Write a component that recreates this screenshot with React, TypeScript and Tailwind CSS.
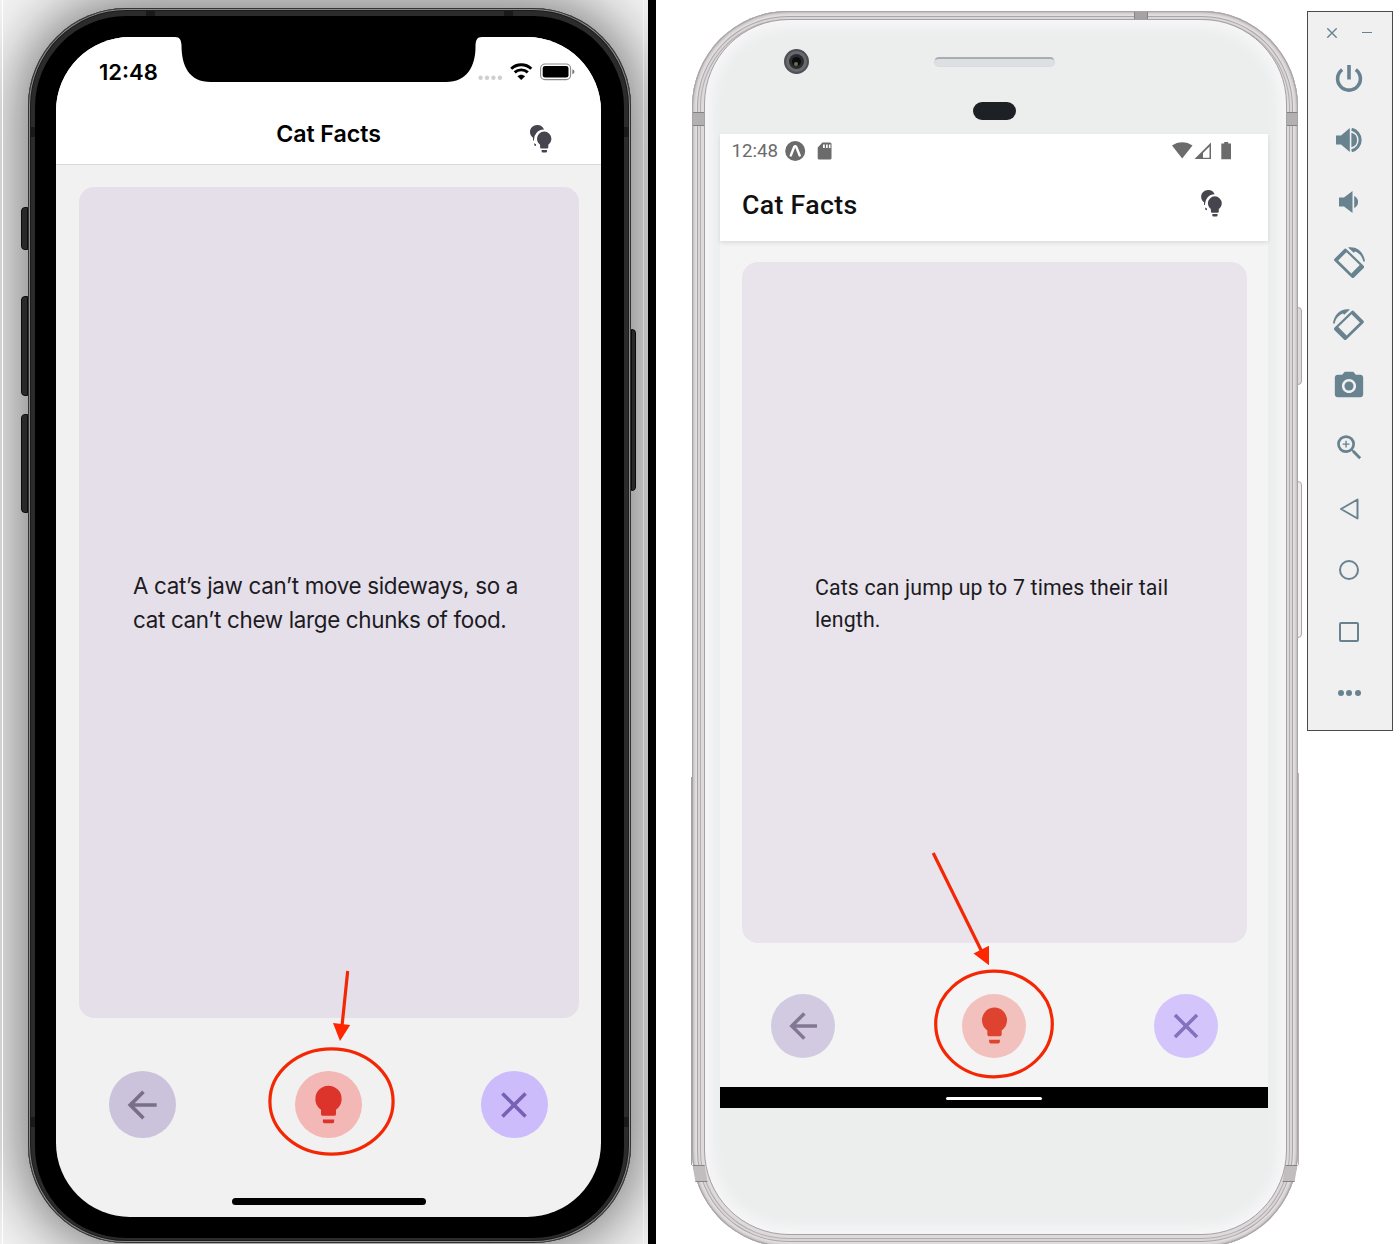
import React from "react";
import { MdCameraAlt, MdZoomIn } from "react-icons/md";

const BULB =
  "M12,2A7,7 0 0,0 5,9C5,11.38 6.19,13.47 8,14.74V17A1,1 0 0,0 9,18H15A1,1 0 0,0 16,17V14.74C17.81,13.47 19,11.38 19,9A7,7 0 0,0 12,2M9,21A1,1 0 0,0 10,22H14A1,1 0 0,0 15,21V20H9V21Z";
const ARROW = "M20,11V13H8L13.5,18.5L12.08,19.92L4.16,12L12.08,4.08L13.5,5.5L8,11H20Z";
const CLOSE =
  "M19,6.41L17.59,5L12,10.59L6.41,5L5,6.41L10.59,12L5,17.59L6.41,19L12,13.41L17.59,19L19,17.59L13.41,12L19,6.41Z";

function Icon({ d, className }: { d: string; className: string }) {
  return (
    <svg viewBox="0 0 24 24" className={className} fill="currentColor">
      <path d={d} />
    </svg>
  );
}

function BulbsIcon({ className }: { className: string }) {
  return (
    <svg viewBox="0 0 22 28" className={className} fill="#46454d">
      <path d="M7.2 0C3.2 0 0 3.1 0 7C0 9.4 1.2 11.4 3 12.7V15.6L4.1 15.5A10 10 0 0 1 14 4.5A7.2 7.2 0 0 0 7.2 0Z" />
      <path d="M4 18.2L6 19.2V21L4.4 20.4Z" />
      <path d="M14.2 6.6A7.2 7.2 0 0 0 7 13.8C7 16.4 8.3 18.4 10.1 19.8V22.2A1.3 1.3 0 0 0 11.4 23.5H17A1.3 1.3 0 0 0 18.3 22.2V19.8C20.1 18.4 21.4 16.4 21.4 13.8A7.2 7.2 0 0 0 14.2 6.6ZM11.6 25H17V26.2A1.3 1.3 0 0 1 15.8 27.5H12.8A1.3 1.3 0 0 1 11.6 26.2Z" />
    </svg>
  );
}

function RotateIcon({ className }: { className: string }) {
  return (
    <svg viewBox="0 0 34 34" className={className}>
      <path
        fill="currentColor"
        fillRule="evenodd"
        d="M1.6 12.2L11.4 2.2Q12.7 .9 14 2.2L31.6 19.4Q32.6 20.7 31.4 21.9L21.7 31.5Q20.4 32.6 19.1 31.5L1.6 14.5Q.5 13.3 1.6 12.2ZM5.3 13.9L18.9 27.2L27.5 18.6L13.9 5.3Z"
      />
      <path fill="currentColor" d="M15.5 .6C24.5 -1 31.8 5.5 33 15H31.2C30.4 10.2 27.4 6.4 22.8 4.6L21.4 6Z" />
    </svg>
  );
}

function IosStatus() {
  return (
    <svg viewBox="0 0 98 20" className="h-5 w-[98px]">
      <g fill="#cfcfcf">
        <circle cx="2.6" cy="15.7" r="2.2" />
        <circle cx="9" cy="15.7" r="2.2" />
        <circle cx="15.4" cy="15.7" r="2.2" />
        <circle cx="21.9" cy="15.7" r="2.2" />
      </g>
      <g fill="none" stroke="#000" strokeWidth="2.9">
        <path d="M33.2 6.7C38.8 1.4 47.7 1.4 53.3 6.7" />
        <path d="M36.7 10.4C40.3 7 46.2 7 49.8 10.4" />
      </g>
      <path d="M39.4 14.2C41.6 12.1 44.9 12.1 47.1 14.2L43.25 18Z" />
      <rect x="62.6" y="2" width="30" height="15.6" rx="4.4" fill="none" stroke="#8a8a8a" strokeWidth="1.1" />
      <rect x="64.7" y="4" width="25.8" height="11.6" rx="2.4" />
      <path d="M94.4 7.3C97.1 8.3 97.1 11.3 94.4 12.3Z" fill="#777" />
    </svg>
  );
}

function IPhone() {
  return (
    <div className="relative ml-[28px] mt-[8px] h-[1235px] w-[603px] rounded-[98px] bg-[#2b2b2b] p-[7px] pt-[8px] shadow-[0_0_60px_8px_rgba(0,0,0,0.52),inset_0_0_0_1px_#333,inset_0_0_0_2px_#8a8a8a,inset_0_0_0_3px_#1c1c1c]">
      <i className="absolute -left-[7px] top-[199px] h-[43px] w-[7px] rounded-l-sm border border-[#0c0c0c] bg-[#292929]" />
      <i className="absolute -left-[7px] top-[288px] h-[100px] w-[7px] rounded-l-sm border border-[#0c0c0c] bg-[#292929]" />
      <i className="absolute -left-[7px] top-[406px] h-[99px] w-[7px] rounded-l-sm border border-[#0c0c0c] bg-[#292929]" />
      <i className="absolute -right-[5px] top-[321px] h-[162px] w-[5px] rounded-r-sm border border-[#0c0c0c] bg-[#292929]" />
      <i className="absolute left-[118px] top-[3px] h-[5px] w-[9px] bg-[#191919]" />
      <i className="absolute right-[118px] top-[3px] h-[5px] w-[9px] bg-[#191919]" />
      <i className="absolute left-[2px] top-[119px] h-[10px] w-[5px] bg-[#191919]" />
      <i className="absolute right-[2px] top-[119px] h-[10px] w-[5px] bg-[#191919]" />
      <i className="absolute left-[2px] top-[1109px] h-[10px] w-[5px] bg-[#191919]" />
      <i className="absolute right-[2px] top-[1109px] h-[10px] w-[5px] bg-[#191919]" />
      <div className="h-[1222px] rounded-[91px] bg-black px-[21px] pt-[21px]">
        <div className="relative flex h-[1180px] w-[545px] flex-col overflow-hidden rounded-[74px] bg-[#f1f1f1] font-['Inter',sans-serif]">
          <svg viewBox="0 0 307 45" className="absolute left-[119px] top-0 h-[45px] w-[307px]">
            <path d="M0 0C5 0 6 3 6.5 8C6.5 29 14 45 36 45H271C292 45 300.5 29 300.5 10C300.5 3 302 0 307 0Z" />
          </svg>
          <div className="flex h-[128px] flex-none flex-col border-b border-[#d8d8d8] bg-white">
            <div className="flex h-[66px] items-center justify-between pl-[43px] pr-[25px] pt-[3px]">
              <span className="pt-px text-[22px] font-semibold">12:48</span>
              <IosStatus />
            </div>
            <div className="grid h-[61px] grid-cols-[60px_1fr_60px] items-center">
              <span />
              <h1 className="pt-[1px] text-center text-[23.2px] font-[570] tracking-[-0.05px]">Cat Facts</h1>
              <BulbsIcon className="mt-[10px] h-7 w-[22px] -translate-x-[11px]" />
            </div>
          </div>
          <div className="mx-[22.5px] mt-[22px] flex h-[831px] items-center justify-center rounded-[15px] bg-[#e5dfea]">
            <p className="w-[391px] whitespace-nowrap text-[22.4px] leading-[33.5px] tracking-[-0.33px] text-[#1c1b1f]">
              A cat’s jaw can’t move sideways, so a
              <br />
              cat can’t chew large chunks of food.
            </p>
          </div>
          <div className="mt-[53px] flex justify-between px-[53px]">
            <button className="flex size-[67px] items-center justify-center rounded-full bg-[#cbc2dc] pr-px text-[#7a6f8a]">
              <Icon d={ARROW} className="size-[44px]" />
            </button>
            <button className="flex size-[67px] items-center justify-center rounded-full bg-[#f3b7b5] text-[#dc332b]">
              <Icon d={BULB} className="size-[45px]" />
            </button>
            <button className="flex size-[67px] items-center justify-center rounded-full bg-[#cdbcfb] pr-px text-[#7860b3]">
              <Icon d={CLOSE} className="size-[44px]" />
            </button>
          </div>
          <div className="mx-auto mt-[60px] h-[7px] w-[194px] rounded-full bg-black" />
        </div>
      </div>
    </div>
  );
}

function AndroidStatus() {
  return (
    <div className="flex h-[33px] items-center pl-[11px] text-[#6b6b6b]">
      <span className="pt-[2px] text-[18.7px]">12:48</span>
      <svg viewBox="0 0 50 20" className="ml-[7px] h-5 w-[50px]" fill="#6b6b6b">
        <circle cx="10.2" cy="10" r="10" />
        <path d="M5.8 14.5L9.1 6Q10.2 4.3 11.3 6L14.7 14.5" fill="none" stroke="#fff" strokeWidth="2.4" strokeLinecap="round" />
        <path
          fillRule="evenodd"
          d="M37.5 1.5H45Q46.5 1.5 46.5 3V17Q46.5 18.5 45 18.5H34.2Q32.7 18.5 32.7 17V6.5ZM38 3.5V7H39.8V3.5ZM41 3.5V7H42.7V3.5ZM43.9 3.5V7H45.5V3.5Z"
        />
      </svg>
      <svg viewBox="0 0 60 20" className="ml-auto mr-[36.5px] h-5 w-[60px]" fill="#6b6b6b">
        <path d="M0 4.5C6 0 14.5 0 20.5 4.5L10.2 17.5Z" />
        <path fillRule="evenodd" d="M39 1.5V18.1H22.5ZM37.5 5.5L31 12V16.7H37.5Z" />
        <path d="M52.2 1H56.2V2.5H59V18.2H49.3V2.5H52.2Z" />
      </svg>
    </div>
  );
}

function AndroidPhone() {
  return (
    <div className="relative ml-[36px] mt-[11px] h-[1236px] w-[606px] rounded-[96px] bg-[#dedadb] px-[12px] py-[8px] shadow-[inset_0_0_0_1px_#a8a4a5,inset_0_0_3px_2px_#b9b3b5,inset_0_0_0_5px_#e4e0e1,inset_0_0_0_6px_#aaa5a7,inset_0_0_0_8px_#dad6d7,inset_0_0_0_9px_#b2aeb0]">
      <i className="absolute left-[1px] top-[101px] h-[14px] w-[11px] border-y border-[#858384] bg-[#b3b0b1]" />
      <i className="absolute right-[1px] top-[101px] h-[14px] w-[11px] border-y border-[#858384] bg-[#b3b0b1]" />
      <i className="absolute right-[150px] top-[1px] h-[7px] w-[14px] border-x border-[#858384] bg-[#a5a2a3]" />
      <i className="absolute left-[2px] top-[1154px] h-[17px] w-[12px] skew-x-[10deg] border-y border-[#858384] bg-[#c1bdbf]" />
      <i className="absolute right-[2px] top-[1154px] h-[17px] w-[12px] -skew-x-[10deg] border-y border-[#858384] bg-[#c1bdbf]" />
      <i className="absolute -right-[4px] top-[296px] h-[78px] w-[5px] rounded-r-sm border border-[#aaa6a8] bg-[#dddadb]" />
      <i className="absolute -right-[4px] top-[470px] h-[157px] w-[5px] rounded-r-sm border border-[#aaa6a8] bg-[#eeeced]" />
      <i className="absolute -left-[1px] top-[766px] h-[388px] w-px bg-[#a5a2a3]" />
      <i className="absolute -right-[1px] top-[762px] h-[392px] w-px bg-[#b5b2b3]" />
      <div className="relative flex h-[1216px] w-[582.5px] flex-col rounded-[85px] border border-[#a5a1a3] bg-[#ebeeed] pl-[15.4px] shadow-[inset_0_0_12px_8px_#f6f5f7]">
        <div className="flex h-[114px] w-[548px] flex-none flex-col items-center">
          <div className="mt-[29px] flex h-[25px] w-full items-center">
            <div className="ml-[63.5px] flex size-[25px] items-center justify-center rounded-full border-2 border-[#4d4f52] bg-[#68696c]">
              <div className="flex size-[15px] items-center justify-center rounded-full bg-[#2b2b2f]">
                <div className="flex size-[9px] items-end justify-center rounded-full bg-[#0b0c10]">
                  <div className="size-[4px] rounded-full bg-[#6f7341]" />
                </div>
              </div>
            </div>
            <div className="ml-[125.5px] h-[10px] w-[121px] rounded-full border border-t-2 border-[#d8dcdf] border-t-[#a9adb0] bg-[#dde0e3]" />
          </div>
          <div className="mt-[28px] h-[18px] w-[43px] rounded-full bg-[#1d2024]" />
        </div>
        <div className="flex h-[974px] w-[548px] flex-none flex-col bg-[#f4f4f4] font-['Roboto',sans-serif]">
          <div className="h-[107px] flex-none bg-white shadow-[0_2px_4px_rgba(0,0,0,0.1)]">
            <AndroidStatus />
            <div className="flex h-[74px] items-center justify-between pl-[21.5px] pr-[45.5px]">
              <h1 className="pt-[2px] text-[26.7px] font-medium tracking-[0.35px] text-[#111]">Cat Facts</h1>
              <BulbsIcon className="mb-[1px] h-[27px] w-[21.5px]" />
            </div>
          </div>
          <div className="mx-[21.5px] mt-[21px] flex h-[681px] flex-none items-center justify-center rounded-[16px] bg-[#e9e4eb]">
            <p className="w-[359px] whitespace-nowrap pt-[2px] text-[21.3px] leading-[32px] tracking-[0.18px] text-[#1c1b1f]">
              Cats can jump up to 7 times their tail
              <br />
              length.
            </p>
          </div>
          <div className="mt-[50.5px] flex justify-between px-[50.5px]">
            <button className="flex size-[64px] items-center justify-center rounded-full bg-[#d2cae1] text-[#827893]">
              <Icon d={ARROW} className="size-[42px]" />
            </button>
            <button className="flex size-[64px] items-center justify-center rounded-full bg-[#f2c0bd] text-[#dd432f]">
              <Icon d={BULB} className="size-[43px]" />
            </button>
            <button className="flex size-[64px] items-center justify-center rounded-full bg-[#d3c5fc] text-[#8571bd]">
              <Icon d={CLOSE} className="size-[42px]" />
            </button>
          </div>
          <div className="mt-auto flex h-[21px] items-center justify-center bg-black">
            <div className="mt-[2px] h-[3px] w-[96px] rounded-full bg-white" />
          </div>
        </div>
      </div>
    </div>
  );
}

function Toolbar() {
  const cell = "flex h-[61.5px] items-center justify-center";
  return (
    <aside className="ml-[9px] mt-[11px] h-[720px] w-[86px] border border-[#4a4a4a] bg-[#f0f0f0] pr-[2px] text-[#68838f]">
      <div className="flex h-[36px] items-center justify-between pl-[19px] pr-[18px] pt-[5px]">
        <svg viewBox="0 0 10 10" className="size-[10px]" stroke="currentColor" strokeWidth="1.4">
          <path d="M.3 .3L9.7 9.7M9.7 .3L.3 9.7" />
        </svg>
        <div className="h-px w-[10px] bg-[#68838f]" />
      </div>
      <div className={cell}>
        <svg viewBox="0 0 28 28" className="mb-[2px] size-7" fill="none" stroke="currentColor" strokeWidth="3.6">
          <path d="M14 1V15.5" />
          <path d="M7.2 5.6A11.4 11.4 0 1 0 20.8 5.6" />
        </svg>
      </div>
      <div className={cell}>
        <svg viewBox="0 0 28 28" className="size-7" fill="currentColor">
          <path d="M1 9.5H6L14.8 2V26L6 18.5H1Z" />
          <path d="M16.4 6.8A7.4 7.4 0 0 1 16.4 21.2Z" />
          <path d="M16.6 3.2A11.1 11.1 0 0 1 16.6 24.8" fill="none" stroke="currentColor" strokeWidth="3.1" />
        </svg>
      </div>
      <div className={cell}>
        <svg viewBox="0 0 22 24" className="h-6 w-[22px]" fill="currentColor">
          <path d="M1 7.5H6L14.5 1V23L6 16.5H1Z" />
          <path d="M16.2 6A6.6 6.6 0 0 1 16.2 18Z" />
        </svg>
      </div>
      <div className={cell}><RotateIcon className="mt-px size-[33px]" /></div>
      <div className={cell}><RotateIcon className="mt-[2px] size-[33px] -translate-x-[1px] -scale-x-100" /></div>
      <div className={cell}><MdCameraAlt className="size-[34px]" /></div>
      <div className={cell}><MdZoomIn className="size-[33px]" /></div>
      <div className={cell}>
        <svg viewBox="0 0 20 22" className="h-[22px] w-5" fill="none" stroke="currentColor" strokeWidth="2" strokeLinejoin="round">
          <path d="M18.5 1.5V20.5L2 11Z" />
        </svg>
      </div>
      <div className={cell}><div className="mb-px size-5 rounded-full border-2 border-[#68838f]" /></div>
      <div className={cell}><div className="size-5 rounded-[2px] border-2 border-[#68838f]" /></div>
      <div className="flex h-[60.5px] items-center justify-center gap-[2.5px]">
        <div className="size-[6px] rounded-full bg-[#68838f]" />
        <div className="size-[6px] rounded-full bg-[#68838f]" />
        <div className="size-[6px] rounded-full bg-[#68838f]" />
      </div>
    </aside>
  );
}

function Annotations() {
  return (
    <svg viewBox="0 0 1400 1244" className="pointer-events-none absolute inset-0 h-[1244px] w-[1400px]" fill="none" stroke="#f42705" strokeWidth="3.2">
      <ellipse cx="331.5" cy="1101.5" rx="61.6" ry="52.6" />
      <path d="M347.7 971L342 1026" />
      <path d="M333 1023L350.2 1025L340 1041Z" fill="#ff2600" stroke="none" />
      <ellipse cx="994" cy="1024" rx="58.3" ry="52.8" />
      <path d="M933.2 853L981.5 951" />
      <path d="M973.5 953.5L989 945.7L989 965.2Z" fill="#ff2600" stroke="none" />
    </svg>
  );
}

export default function App() {
  return (
    <main className="relative flex h-[1244px] w-[1400px] overflow-hidden bg-white">
      <section className="flex h-full w-[648px] flex-none items-start overflow-hidden bg-[#f3f3f3]">
        <IPhone />
      </section>
      <div className="w-2 flex-none bg-black" />
      <section className="flex h-full w-[744px] flex-none items-start overflow-hidden">
        <AndroidPhone />
        <Toolbar />
      </section>
      <i className="absolute left-[2px] top-0 h-full w-px bg-white" />
      <i className="absolute left-[643px] top-0 h-full w-px bg-white/40" />
      <Annotations />
    </main>
  );
}
